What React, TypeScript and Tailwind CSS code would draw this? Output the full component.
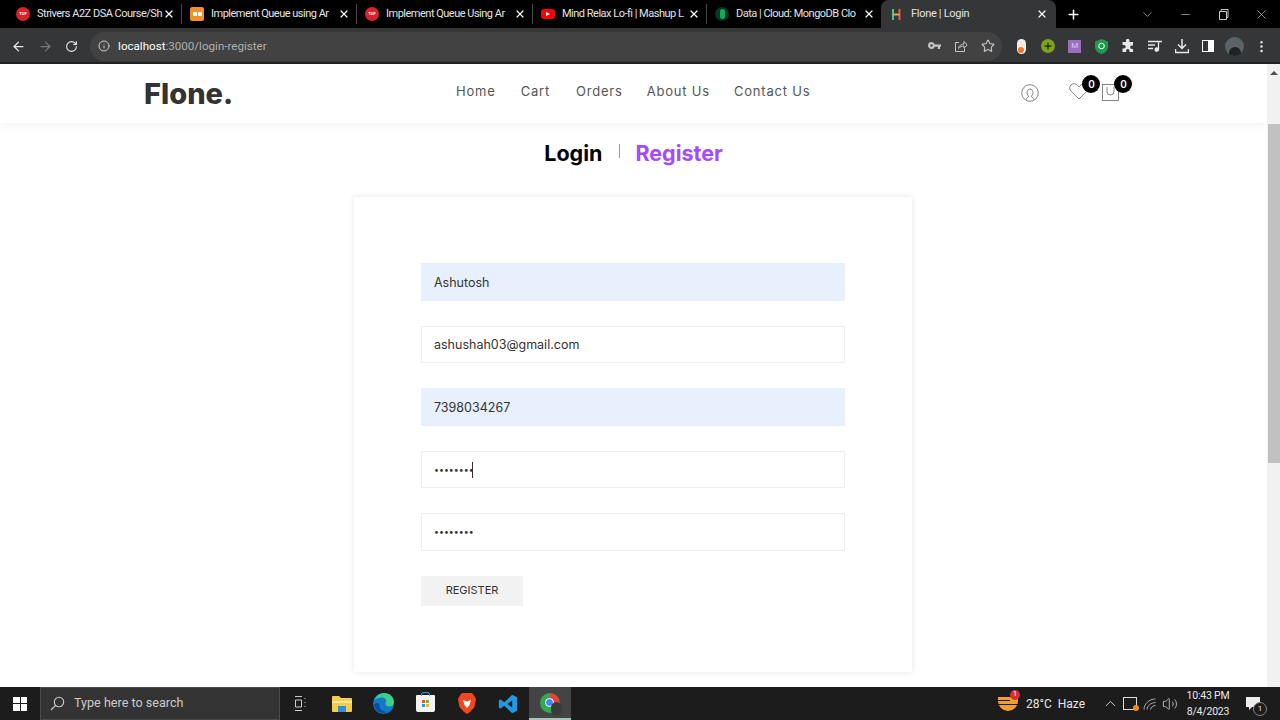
import { ArrowLeft, ArrowRight, RotateCw, Info, Star, X, Plus, ChevronDown, Minus, ChevronUp, Volume2, EllipsisVertical } from "lucide-react";
import type { ReactNode } from "react";

const FONT_UI = "font-['Roboto',sans-serif]";

function TufIcon() {
  return (
    <span className="flex h-[14px] w-[14px] shrink-0 items-center justify-center rounded-full bg-[#d8232a] text-[4px] font-bold text-white">TUF</span>
  );
}

const tabs: { title: string; w: string; icon: ReactNode }[] = [
  { title: "Strivers A2Z DSA Course/Sh", w: "w-[174px]", icon: <TufIcon /> },
  {
    title: "Implement Queue using Ar",
    w: "w-[175px]",
    icon: (
      <span className="flex h-[14px] w-[14px] shrink-0 items-center justify-center gap-px rounded-[2px] bg-[#f0902a]">
        <span className="h-[4px] w-[4px] rounded-[1px] bg-white" />
        <span className="h-[4px] w-[4px] rounded-[1px] bg-white" />
      </span>
    ),
  },
  { title: "Implement Queue Using Ar", w: "w-[176px]", icon: <TufIcon /> },
  {
    title: "Mind Relax Lo-fi | Mashup L",
    w: "w-[174px]",
    icon: (
      <span className="flex h-[10px] w-[14px] shrink-0 items-center justify-center rounded-[3px] bg-[#f00]">
        <span className="h-0 w-0 border-y-[2.5px] border-l-[4px] border-y-transparent border-l-white" />
      </span>
    ),
  },
  {
    title: "Data | Cloud: MongoDB Clo",
    w: "w-[174px]",
    icon: (
      <span className="flex h-[14px] w-[14px] shrink-0 items-center justify-center rounded-full bg-[#06352c]">
        <span className="h-[10px] w-[5px] rounded-full bg-[#13aa52]" />
      </span>
    ),
  },
];

function ChromeTabs() {
  return (
    <div className={`${FONT_UI} flex h-7 items-center bg-black pl-2 text-white`}>
      {tabs.map((t, i) => (
        <div key={t.title} className={`${t.w} ${i < 4 ? "border-r border-[#4a4a4a]" : ""} flex h-[20px] shrink-0 items-center gap-[7px] pl-2 pr-[6px]`}>
          {t.icon}
          <span className="min-w-0 flex-1 whitespace-nowrap text-[11px] tracking-[-0.5px] text-[#e4e4e4]">{t.title}</span>
          <X size={12} strokeWidth={2.4} className="shrink-0" />
        </div>
      ))}
      <div className="flex h-7 w-[175px] shrink-0 items-center rounded-t-lg bg-[#353638] pl-[9px] pr-2">
        <svg width="13" height="13" viewBox="0 0 13 13" className="mr-[8px] shrink-0">
          <path d="M3 1v11" stroke="#4cc38a" strokeWidth="2" />
          <path d="M9.5 1v11" stroke="#e8564f" strokeWidth="2" />
          <path d="M3 6.5h6.5" stroke="#e8a04f" strokeWidth="2" />
        </svg>
        <span className="flex-1 text-[11px] tracking-[-0.3px] text-[#e4e4e4]">Flone | Login</span>
        <X size={12} strokeWidth={2.4} />
      </div>
      <Plus size={15} strokeWidth={2.4} className="ml-[10px]" />
      <div className="ml-auto flex items-center text-[#c8c8c8]">
        <span className="flex w-[38px] justify-center"><ChevronDown size={15} strokeWidth={1.1} /></span>
        <span className="flex w-[38px] justify-center"><Minus size={13} strokeWidth={1.2} /></span>
        <span className="flex w-[38px] justify-center">
          <svg width="11" height="11" viewBox="0 0 11 11" fill="none" stroke="currentColor"><path d="M1.5 2.5h7v8h-7zM3 2.5v-2h7v8H8.5" /></svg>
        </span>
        <span className="flex w-[38px] justify-center"><X size={15} strokeWidth={1.1} /></span>
      </div>
    </div>
  );
}

function Slot({ children }: { children: ReactNode }) {
  return <span className="flex w-[26.7px] shrink-0 items-center justify-center">{children}</span>;
}

function ChromeToolbar() {
  return (
    <div className={`${FONT_UI} flex h-9 items-center border-b-2 border-[#222] bg-[#353638] pl-[5px] pt-[2px] text-[#e8e8e8]`}>
      <Slot><ArrowLeft size={15} /></Slot>
      <Slot><ArrowRight size={15} className="text-[#777]" /></Slot>
      <Slot><RotateCw size={13} /></Slot>
      <div className="ml-[5px] flex h-[29px] w-[912px] shrink-0 items-center rounded-full bg-[#424242] pl-[8px] pr-[1px]">
        <Info size={12} className="mr-[8px] text-[#cfcfcf]" />
        <span className="pt-px text-[11.6px] text-white">localhost</span>
        <span className="pt-px text-[11.6px] text-[#b0b0b0]">:3000/login-register</span>
        <div className="ml-auto flex items-center text-[#c4c4c4]">
          <Slot>
            <svg width="13" height="9" viewBox="0 0 13 9" fill="currentColor"><path d="M3.5 0a3.5 3.5 0 0 1 3.3 2.5H13v2.2h-1V7H9.8V4.7H6.8A3.5 3.5 0 1 1 3.5 0zm0 2.2a1.3 1.3 0 1 0 0 2.6 1.3 1.3 0 0 0 0-2.6z" /></svg>
          </Slot>
          <Slot>
            <svg width="14" height="14" viewBox="0 0 14 14" fill="none" stroke="currentColor" strokeWidth="1"><path d="M5 3.5H1.5v9h9V9.5M4.5 9.5c.5-3 3-4.500 5.500-4.500V2.500L13.200 6 10 9.200V7c-2.200 0-4 .800-5.500 2.500z" /></svg>
          </Slot>
          <Slot><Star size={14} /></Slot>
        </div>
      </div>
      <div className="ml-[6px] flex items-center">
        <Slot>
          <span className="flex h-[15px] w-[9px] items-end justify-center rounded-full bg-[#f0ece8] pb-[1px]"><span className="h-[6px] w-[6px] rounded-full bg-[#f07a28]" /></span>
        </Slot>
        <Slot>
          <span className="flex h-[14px] w-[14px] items-center justify-center rounded-full bg-[#7ea31c] text-[#14240a]"><Plus size={10} strokeWidth={3} /></span>
        </Slot>
        <Slot>
          <span className="flex h-[13px] w-[13px] items-center justify-center bg-[#9a6fc0] text-[8px] text-[#d8c8e8]">M</span>
        </Slot>
        <Slot>
          <svg width="13" height="15" viewBox="0 0 13 15"><path d="M6.500 0L13 2.500V8c0 3.500-3 6-6.500 7C3 14 0 11.500 0 8V2.500z" fill="#1d9a4a" /><circle cx="6.500" cy="7" r="2.800" fill="none" stroke="#fff" /></svg>
        </Slot>
        <Slot>
          <svg width="14" height="14" viewBox="0 0 14 14" fill="currentColor"><path d="M5 1.500a1.700 1.700 0 0 1 3.400 0V3H12v3.500h-1.200a1.700 1.700 0 0 0 0 3.400H12V13H8.500v-1.200a1.700 1.700 0 0 0-3.400 0V13H1.500V9.500H3a1.700 1.700 0 0 0 0-3.400H1.500V3H5z" /></svg>
        </Slot>
        <Slot>
          <svg width="14" height="12" viewBox="0 0 14 12" fill="none" stroke="currentColor" strokeWidth="1.300"><path d="M0 1.500h10M0 5h7M0 8.500h5M10.500 9.500V1.500H14" /><circle cx="8.800" cy="9.500" r="1.700" fill="currentColor" /></svg>
        </Slot>
        <Slot>
          <svg width="14" height="15" viewBox="0 0 14 15" fill="none" stroke="currentColor" strokeWidth="1.500"><path d="M7 0v9M3 5.500L7 9.500l4-4M.5 10v3.500h13V10" /></svg>
        </Slot>
        <Slot>
          <span className="flex h-[12px] w-[12px] justify-start border-[1.5px] border-white"><span className="w-[5px]" /><span className="w-[5px] bg-white" /></span>
        </Slot>
        <Slot>
          <span className="flex h-[19px] w-[19px] items-end justify-center overflow-hidden rounded-full bg-[#5a6466]"><span className="h-[9px] w-[12px] rounded-t-full bg-[#1e2224]" /></span>
        </Slot>
        <Slot><EllipsisVertical size={15} /></Slot>
      </div>
    </div>
  );
}

function Field({ value, type = "text", filled = false, caret = false }: { value: string; type?: string; filled?: boolean; caret?: boolean }) {
  return (
    <div className="relative">
      <input
        readOnly
        type={type}
        value={value}
        className={`${filled ? "border-[#e8f0fe] bg-[#e8f0fe]" : "border-[#efefef] bg-white"} ${type === "password" ? "text-[8.800px]" : "pt-px text-[12.500px]"} block h-[37.500px] w-full border px-[12px] text-[#333] outline-none`}
      />
      {caret && <span className="absolute left-[51px] top-[11px] h-[16px] w-px bg-[#333]" />}
    </div>
  );
}

function Header() {
  return (
    <header className="relative flex h-[59px] shrink-0 items-start bg-white pl-[144px] shadow-[0_2px_10px_rgba(0,0,0,0.05)]">
      <span className="mt-[12px] w-[312px] text-[29px] font-extrabold leading-[36px] text-[#333]">Flone.</span>
      <nav className="mt-[18px] flex gap-[25px] text-[13px] leading-[18px] tracking-[0.8px] text-[#555]">
        <span>Home</span>
        <span className="mr-px">Cart</span>
        <span className="-mr-px">Orders</span>
        <span className="-mr-px">About Us</span>
        <span>Contact Us</span>
      </nav>
      <div className="relative ml-[211px] mt-[20px] flex items-start text-[#666]">
        <svg width="18" height="18" viewBox="0 0 18 18" fill="none" stroke="currentColor" strokeWidth="0.800">
          <circle cx="9" cy="9" r="8.300" />
          <path d="M5.500 15.500c0-2 1.500-2.500 2.400-3-1-.800-1.900-2-1.900-3.800C6 6.700 7.200 5 9 5s3 1.700 3 3.700c0 1.800-.900 3-1.900 3.800.900.500 2.400 1 2.400 3" />
        </svg>
        <svg width="20" height="17" viewBox="0 0 20 17" fill="none" stroke="currentColor" strokeWidth="0.800" className="-mt-[1px] ml-[30px]">
          <path d="M10 16L2 8.200C.200 6.400.200 3.600 2 1.900c1.800-1.700 4.500-1.500 6.200.200L10 3.800l1.800-1.700c1.700-1.700 4.400-1.900 6.200-.200 1.800 1.700 1.800 4.500 0 6.300z" />
        </svg>
        <svg width="17" height="17" viewBox="0 0 17 17" fill="none" stroke="currentColor" strokeWidth="0.800" className="ml-[13px]">
          <rect x="0.500" y="0.500" width="16" height="16" />
          <path d="M5 3v4.500a3.500 3.500 0 0 0 7 0V3" />
        </svg>
        <span className="absolute left-[61px] top-[-9px] flex h-[18px] w-[18px] items-center justify-center rounded-full bg-black text-[10px] font-semibold text-white">0</span>
        <span className="absolute left-[93px] top-[-9px] flex h-[18px] w-[18px] items-center justify-center rounded-full bg-black text-[10px] font-semibold text-white">0</span>
      </div>
    </header>
  );
}

function Page() {
  return (
    <div className="flex min-h-0 flex-1">
      <main className="flex min-w-0 flex-1 flex-col overflow-hidden bg-white">
        <Header />
        <div className="flex h-[74px] shrink-0 items-start justify-center pt-[15px]">
          <span className="text-[21.500px] font-bold leading-[30px] text-black">Login</span>
          <span className="ml-[17px] mr-[15px] mt-[6px] h-[14px] w-px bg-[#999]" />
          <span className="text-[21.500px] font-bold leading-[30px] text-[#a749ff]">Register</span>
        </div>
        <div className="ml-[354px] flex h-[475px] w-[558px] shrink-0 flex-col gap-[25px] bg-white px-[67px] pt-[66px] shadow-[0_0_6px_rgba(0,0,0,0.1)]">
          <Field value="Ashutosh" filled />
          <Field value="ashushah03@gmail.com" />
          <Field value="7398034267" filled />
          <Field value="password" type="password" caret />
          <Field value="password" type="password" />
          <button type="button" className="h-[30px] w-[102px] bg-[#f2f2f2] text-[11px] font-normal text-[#333]">REGISTER</button>
        </div>
      </main>
      <div className="flex w-[13px] shrink-0 flex-col bg-[#f1f1f1]">
        <div className="flex h-[17px] items-center justify-center">
          <span className="h-0 w-0 border-x-[4px] border-b-[4px] border-x-transparent border-b-[#505050]" />
        </div>
        <div className="mx-auto mt-[43px] h-[339px] w-[12px] bg-[#c1c1c1]" />
      </div>
    </div>
  );
}

function TaskSlot({ children, active = false }: { children: ReactNode; active?: boolean }) {
  return (
    <span className={`${active ? "border-b-2 border-[#a9c4bb] bg-[#444]" : ""} flex h-full w-[41.500px] shrink-0 items-center justify-center`}>{children}</span>
  );
}

function TraySlot({ children }: { children: ReactNode }) {
  return <span className="flex w-[20px] shrink-0 justify-center">{children}</span>;
}

function Taskbar() {
  return (
    <div className={`${FONT_UI} flex h-[33px] shrink-0 items-center bg-[#1c1c1c] text-white`}>
      <div className="flex w-[40px] justify-center">
        <div className="grid w-[14px] grid-cols-2 gap-[1px]">
          <span className="h-[6.500px] bg-white" />
          <span className="h-[6.500px] bg-white" />
          <span className="h-[6.500px] bg-white" />
          <span className="h-[6.500px] bg-white" />
        </div>
      </div>
      <div className="flex h-full w-[240px] items-center gap-[9px] border border-[#4a4a4a] bg-[#333] pl-[9px] text-[12.600px] text-[#ccc]">
        <svg width="15" height="15" viewBox="0 0 15 15" fill="none" stroke="currentColor" strokeWidth="1.100"><circle cx="9" cy="6" r="4.700" /><path d="M5.500 9.500L1 14" /></svg>
        Type here to search
      </div>
      <div className="flex h-full items-center">
        <TaskSlot>
          <svg width="14" height="15" viewBox="0 0 14 15" fill="none" stroke="#ccc"><path d="M1 .5h7M1 14.500h7M1.500 4h6v7h-6zM11 2v1M11 6v1M11 10v1" /></svg>
        </TaskSlot>
        <TaskSlot>
          <svg width="20" height="17" viewBox="0 0 20 17"><path d="M0 2a1 1 0 0 1 1-1h6l2 2h10a1 1 0 0 1 1 1v12a1 1 0 0 1-1 1H1a1 1 0 0 1-1-1z" fill="#f7cb4d" /><path d="M0 6h20v2H0z" fill="#ffe69a" /><rect x="6" y="11" width="8" height="6" fill="#2f8fdc" /></svg>
        </TaskSlot>
        <TaskSlot>
          <svg width="21" height="21" viewBox="0 0 21 21">
            <circle cx="10.500" cy="10.500" r="10.500" fill="#1278c8" />
            <path d="M1 8C3 2 8 0 11 0c6 0 10 4 10 9 0 3-2 4.500-4.500 4.500-3 0-4-1.500-4-3 0-1.500 1-2 1-3-1-2.500-3.500-3-5-3C5 4.500 2 6 1 8z" fill="#3ad08a" />
            <path d="M6 11c0 5 4 8 8 8-5 3-12-1-13-7 1-2 3-3 5-1z" fill="#0a4d9c" />
          </svg>
        </TaskSlot>
        <TaskSlot>
          <span className="relative flex h-[17px] w-[19px] items-center justify-center rounded-b-[2px] rounded-t-[1px] bg-[#f4f4f4]">
            <span className="absolute -top-[3px] h-[4px] w-[9px] rounded-t-[3px] border border-b-0 border-[#2aa0e0]" />
            <span className="grid grid-cols-2 gap-px">
              <span className="h-[3px] w-[3px] bg-[#e8542c]" />
              <span className="h-[3px] w-[3px] bg-[#7cb82c]" />
              <span className="h-[3px] w-[3px] bg-[#2a9ae0]" />
              <span className="h-[3px] w-[3px] bg-[#f4b82c]" />
            </span>
          </span>
        </TaskSlot>
        <TaskSlot>
          <svg width="18" height="21" viewBox="0 0 18 21"><path d="M4 0h10l2 2.500L18 6l-1.500 8L12 19l-3 2-3-2-4.500-5L0 6l2-3.500z" fill="#f0481e" /><path d="M5 7l4 1.500L13 7l-1.500 5L9 15l-2.500-3z" fill="#fff" /></svg>
        </TaskSlot>
        <TaskSlot>
          <svg width="20" height="20" viewBox="0 0 24 24" fill="#1f9ae0"><path d="M17 1l6 2.800v16.400L17 23 7.500 14 3 17.500 1 16.500v-9l2-1L7.500 10 17 1zm0 6.500L11.500 12l5.500 4.500v-9z" /></svg>
        </TaskSlot>
        <TaskSlot active>
          <span className="relative h-[20px] w-[20px] rounded-full bg-[conic-gradient(#e0463a_0_33%,#f4c020_33%_45%,#35a853_45%_100%)]">
            <span className="absolute left-[5.500px] top-[5.500px] h-[9px] w-[9px] rounded-full border border-white bg-[#4285f4]" />
            <span className="absolute -bottom-[2px] -right-[2px] h-[13px] w-[11px] rounded-full bg-[#3a3a3a]" />
          </span>
        </TaskSlot>
      </div>
      <div className="ml-auto flex h-full items-center text-[#e8e8e8]">
        <span className="relative mr-[8px] h-[14px] w-[20px] rounded-b-full bg-[#f0a030]">
          <span className="absolute left-0 top-[3px] h-px w-[12px] bg-[#1c1c1c]" />
          <span className="absolute left-0 top-[7px] h-px w-[20px] bg-[#1c1c1c]" />
          <span className="absolute -right-[2px] -top-[7px] flex h-[10px] w-[10px] items-center justify-center rounded-full bg-[#d83030] text-[7px] text-white">1</span>
        </span>
        <span className="mr-[16px] w-[58px] whitespace-nowrap text-[12px]">28°C&nbsp; Haze</span>
        <TraySlot><ChevronUp size={17} strokeWidth={1.200} /></TraySlot>
        <TraySlot>
          <span className="relative h-[13px] w-[14px] border border-[#ddd]">
            <span className="absolute -bottom-[2px] -right-[3px] h-[6px] w-[6px] rounded-full bg-[#f08a1e]" />
          </span>
        </TraySlot>
        <TraySlot>
          <svg width="14" height="12" viewBox="0 0 14 12" fill="none" stroke="#aaa"><path d="M1 11.500C1 6 6 1 12.500 1M4 11.500C4 8 8 4.500 12.500 4.500M7.500 11.500c0-2 2.500-4 5-4" /></svg>
        </TraySlot>
        <TraySlot><Volume2 size={16} strokeWidth={1.100} /></TraySlot>
        <div className="ml-[8px] mr-[18px] flex w-[40px] flex-col items-center whitespace-nowrap text-[10.500px] leading-[16px] tracking-[-0.2px]">
          <span>10:43 PM</span>
          <span>8/4/2023</span>
        </div>
        <span className="relative mr-[20px]">
          <svg width="14" height="13" viewBox="0 0 14 13" fill="#eee"><path d="M0 0h14v10H6l-3 3v-3H0z" /></svg>
          <span className="absolute -bottom-[6px] -right-[7px] flex h-[14px] w-[14px] items-center justify-center rounded-full border border-[#888] bg-[#1c1c1c] text-[8px]">1</span>
        </span>
      </div>
    </div>
  );
}

export default function App() {
  return (
    <div className="flex h-[720px] w-[1280px] flex-col overflow-hidden font-['Inter',sans-serif]">
      <ChromeTabs />
      <ChromeToolbar />
      <Page />
      <Taskbar />
    </div>
  );
}
